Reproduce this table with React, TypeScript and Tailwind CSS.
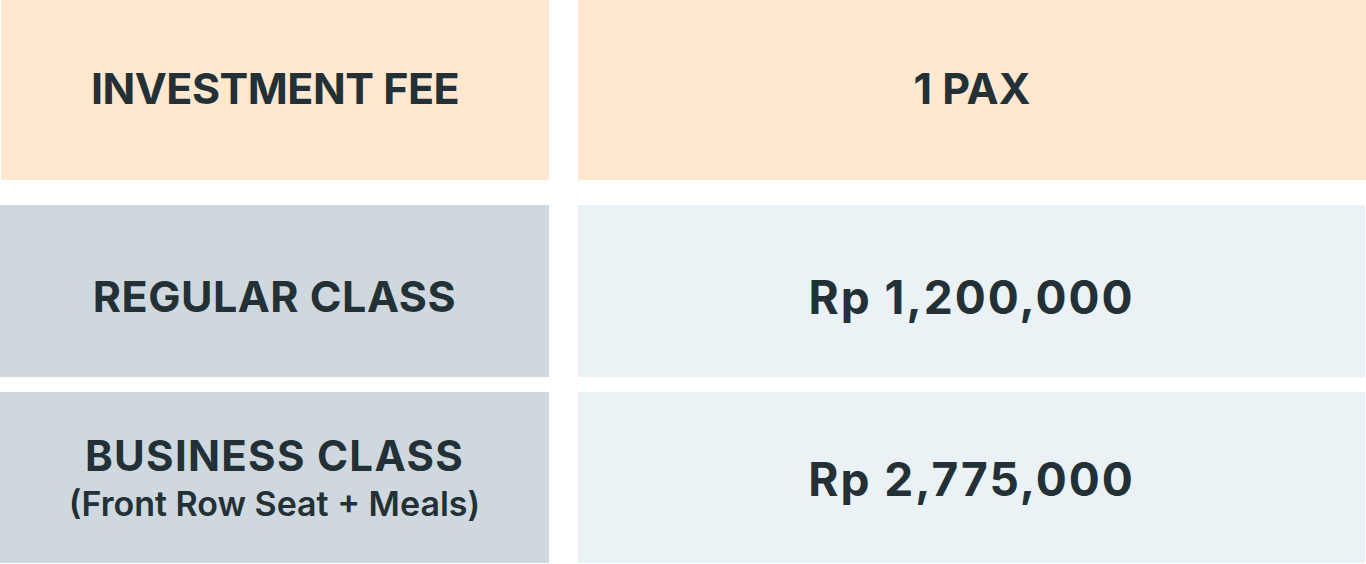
export default function App() {
  return (
    <div
      className="w-[1366px] h-[564px] bg-white text-[#233035] overflow-hidden"
      style={{ fontFamily: 'Inter, "Noto Sans", sans-serif' }}
    >
      {/* header */}
      <div className="grid grid-cols-[549px_788px] gap-x-[29px] h-[180px]">
        <div className="bg-[#ffe7d0] ml-[1px] flex items-center justify-center pb-[4px]">
          <span className="text-[43px] font-bold tracking-[-0.5px] leading-none">INVESTMENT FEE</span>
        </div>
        <div className="bg-[#ffe7d0] flex items-center justify-center pb-[4px]">
          <span className="text-[43px] font-bold tracking-[0px] leading-none">1 PAX</span>
        </div>
      </div>

      {/* regular */}
      <div className="grid grid-cols-[549px_787px] gap-x-[29px] h-[172px] mt-[25px]">
        <div className="bg-[#cfd8de] flex items-center justify-center pt-[11px]">
          <span className="text-[43px] font-bold tracking-[0.5px] leading-none">REGULAR CLASS</span>
        </div>
        <div className="bg-[#eaf2f5] flex items-center justify-center pt-[11px]">
          <span className="text-[46px] font-bold tracking-[2px] leading-none">Rp 1,200,000</span>
        </div>
      </div>

      {/* business */}
      <div className="grid grid-cols-[549px_787px] gap-x-[29px] h-[171px] mt-[15px]">
        <div className="bg-[#cfd8de] flex flex-col items-center justify-center pt-[1px]">
          <span className="text-[42px] font-bold tracking-[1.3px] leading-none">BUSINESS CLASS</span>
          <span className="text-[34px] font-semibold leading-none mt-[10px]">(Front Row Seat + Meals)</span>
        </div>
        <div className="bg-[#eaf2f5] flex items-center justify-center pt-[2px]">
          <span className="text-[46px] font-bold tracking-[2px] leading-none">Rp 2,775,000</span>
        </div>
      </div>
    </div>
  );
}
